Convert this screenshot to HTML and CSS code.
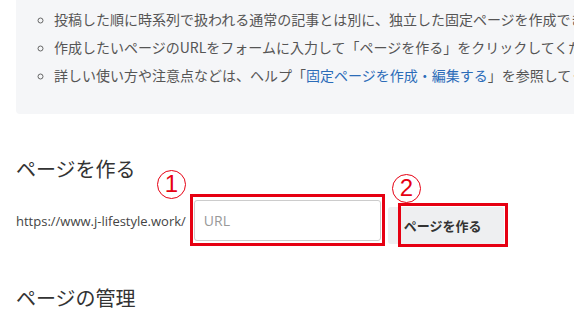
FILE: index.html
```html
<!DOCTYPE html>
<html lang="ja">
<head>
    <meta charset="UTF-8">
    <title>固定ページ</title>
    <meta name="viewport" content="width=device-width, initial-scale=1">
    <link rel="stylesheet" href="styles.css">
</head>
<body>
<div class="page">
    <!-- 説明 -->
    <div class="notice">
        <ul>
            <li>投稿した順に時系列で扱われる通常の記事とは別に、独立した固定ページを作成できます。</li>
            <li>作成したいページのURLをフォームに入力して「ページを作る」をクリックしてください。</li>
            <li>詳しい使い方や注意点などは、ヘルプ「<a href="#">固定ページを作成・編集する</a>」を参照してください。</li>
        </ul>
    </div>

    <h2 class="section-title">ページを作る</h2>
    <form class="create-row" autocomplete="off">
        <span class="prefix">https://www.j-lifestyle.work/</span>
        <span class="field">
            <input type="text" class="url-input" placeholder="URL">
            <span class="mark mark-input"></span>
            <span class="num num-1">1</span>
        </span>
        <span class="btn-wrap">
            <button type="button" class="btn">ページを作る</button>
            <span class="mark mark-btn"></span>
            <span class="num num-2">2</span>
        </span>
    </form>

    <h2 class="section-title manage">ページの管理</h2>
</div>
</body>
</html>
```

FILE: styles.css
```css
html { font-size: 14px; }
body { margin: 0; padding: 0; background: #fff; font-family: "Noto Sans CJK JP", "Open Sans", sans-serif; color: #333; overflow: hidden; }
.page { padding-left: 16px; }

.notice { background: #f5f6f8; padding: 5px 0 25px 0; border-radius: 0 0 0 4px; }
.notice ul { margin: 0; padding-left: 38px; list-style: circle; color: #555; font-size: 14px; line-height: 28px; white-space: nowrap; }
.notice li::marker { color: #666; font-size: 12px; }
.notice a { color: #2b6cb8; text-decoration: none; }

.section-title { margin: 41px 0 0 0; font-size: 20px; font-weight: normal; line-height: 28px; color: #333; }
.section-title.manage { margin-top: 40px; }

.create-row { display: flex; align-items: flex-start; margin-top: 17px; }
.prefix { font-family: "Open Sans", "Liberation Sans", sans-serif; font-size: 13px; color: #444; margin-top: 12px; }
.field { position: relative; margin-left: 8px; }
.url-input { display: block; box-sizing: border-box; width: 187px; height: 41px; padding: 0 9px; border: 1px solid #ccc; border-radius: 3px; font-family: "Open Sans", sans-serif; font-size: 14px; color: #333; outline: none; }
.url-input::placeholder { color: #999; }

.btn-wrap { position: relative; margin-left: 7px; margin-top: 7px; }
.btn { display: block; width: 116px; height: 37px; padding: 0 0 0 16px; text-align: left; background: #eeeff1; border: none; border-radius: 3px; font-family: "Noto Sans CJK JP", sans-serif; font-size: 13px; font-weight: bold; color: #333; }

/* 注釈 */
.mark { position: absolute; border: 3px solid #e60012; pointer-events: none; }
.mark-input { left: -4px; top: -6px; width: 189px; height: 46px; }
.mark-btn { left: 10px; top: -4px; width: 104px; height: 38px; }
.num { position: absolute; box-sizing: border-box; width: 29px; height: 29px; border: 1.5px solid #e60012; border-radius: 50%; color: #e60012; font-family: "Liberation Sans", sans-serif; font-size: 24px; line-height: 26px; text-align: center; }
.num-1 { left: -37px; top: -30px; }
.num-2 { left: 4px; top: -33px; }
```
